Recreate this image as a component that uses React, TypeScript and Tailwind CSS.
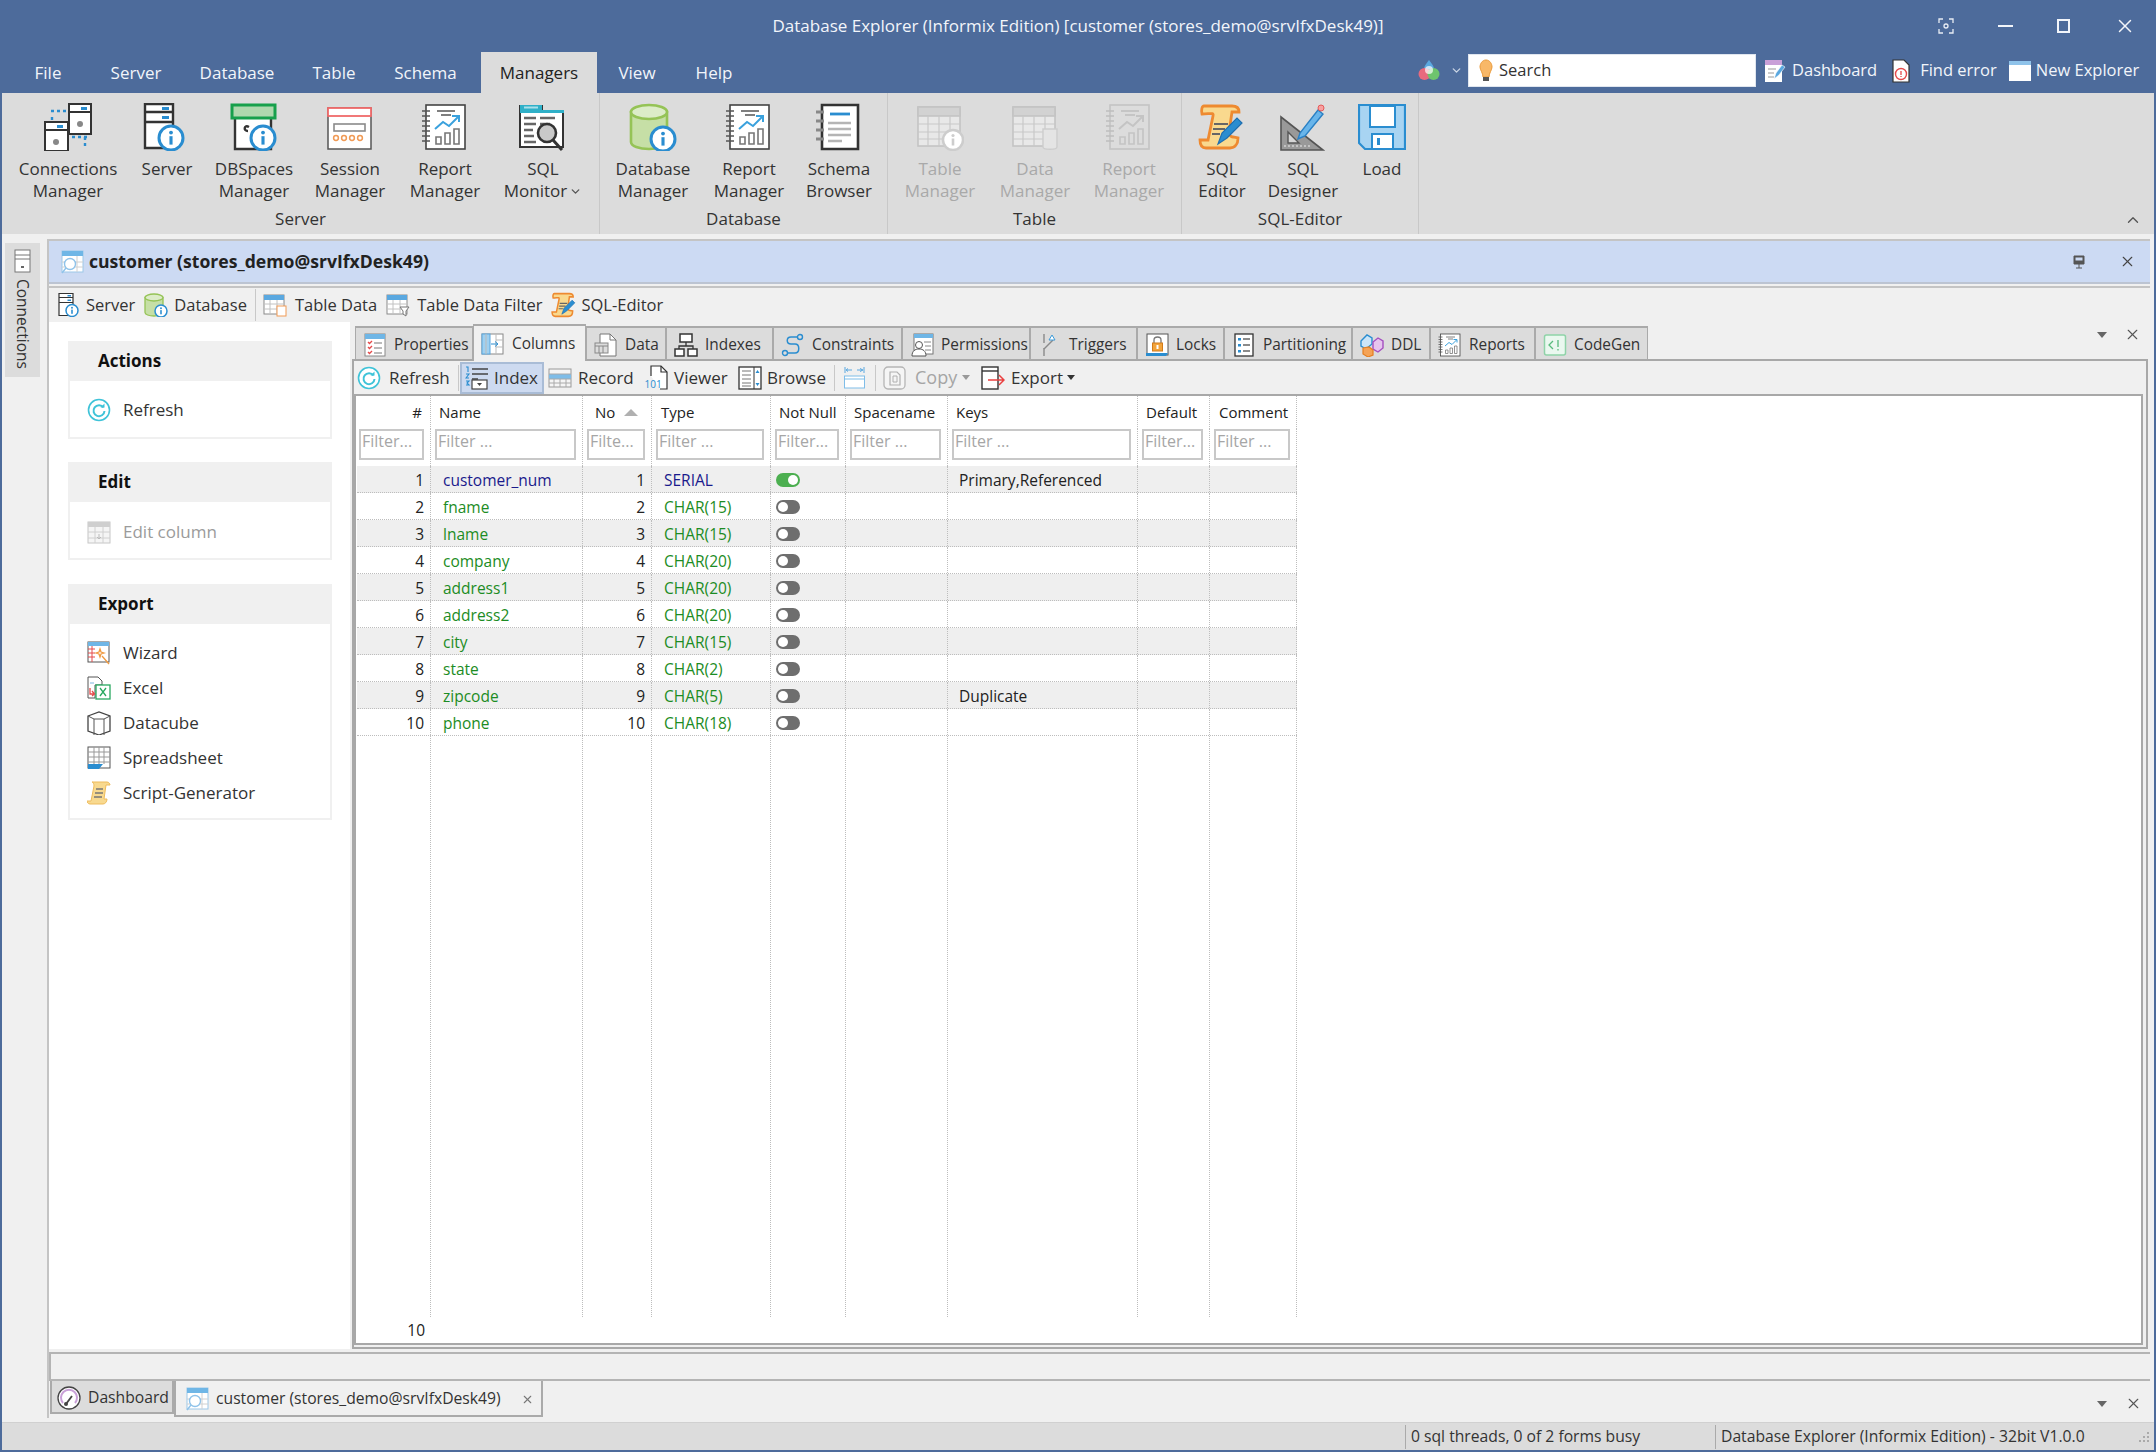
import type { ReactNode } from "react";
import { ChevronDown, ChevronUp, X } from "lucide-react";

type IconProps = { size?: number };

function Svg({ size = 24, box = 24, children }: { size?: number; box?: number; children: ReactNode }) {
  return (
    <svg width={size} height={size} viewBox={`0 0 ${box} ${box}`} fill="none" className="shrink-0">
      {children}
    </svg>
  );
}

function InfoBadge({ cx = 35, cy = 35, r = 12, color = "#2a8dd0" }: { cx?: number; cy?: number; r?: number; color?: string }) {
  return (
    <g>
      <circle cx={cx} cy={cy} r={r} fill="#fff" stroke={color} strokeWidth={r / 4} />
      <circle cx={cx} cy={cy - r * 0.45} r={r * 0.16} fill={color} />
      <rect x={cx - r * 0.13} y={cy - r * 0.15} width={r * 0.26} height={r * 0.7} fill={color} />
    </g>
  );
}

function ConnectionsIcon({ size = 48 }: IconProps) {
  return (
    <Svg size={size} box={48}>
      <rect x="25" y="1" width="22" height="30" fill="#fff" stroke="#333" strokeWidth="2" />
      <path d="M25 9h22" stroke="#333" strokeWidth="2" />
      <rect x="37" y="4" width="6" height="3" fill="#2a8dd0" />
      <circle cx="36" cy="21" r="3" fill="#888" />
      <rect x="1" y="19" width="23" height="29" fill="#fff" stroke="#333" strokeWidth="2" />
      <path d="M1 27h23" stroke="#333" strokeWidth="2" />
      <rect x="13" y="22" width="6" height="3" fill="#2a8dd0" />
      <circle cx="12" cy="39" r="3" fill="#888" />
      <path d="M7 8h18M8 14v3M28 34h15M41 34v9" stroke="#2a8dd0" strokeWidth="2.4" strokeDasharray="3 3" />
    </Svg>
  );
}

function ServerInfoIcon({ size = 48 }: IconProps) {
  return (
    <Svg size={size} box={48}>
      <path d="M2 1h28v44H2z" fill="#fff" stroke="#333" strokeWidth="2.4" />
      <path d="M2 9h28M2 19h28" stroke="#333" strokeWidth="2.4" />
      <rect x="19" y="4" width="7" height="3" fill="#2a8dd0" />
      <rect x="19" y="13" width="7" height="3" fill="#2a8dd0" />
      <InfoBadge cx={28} cy={35} />
    </Svg>
  );
}

function DbspacesIcon({ size = 48 }: IconProps) {
  return (
    <Svg size={size} box={48}>
      <path d="M5 10h36v36H5z" fill="#fff" stroke="#333" strokeWidth="2.4" />
      <path d="M19 24c-5-3-6 4-1 4" stroke="#333" strokeWidth="2.4" />
      <rect x="2" y="2" width="43" height="13" fill="#afd8ae" stroke="#17a04c" strokeWidth="3" />
      <InfoBadge cx={33} cy={35} />
    </Svg>
  );
}

function SessionIcon({ size = 48 }: IconProps) {
  return (
    <Svg size={size} box={48}>
      <rect x="2" y="5" width="43" height="41" fill="#fff" stroke="#555" strokeWidth="1.5" />
      <rect x="2" y="5" width="43" height="8" fill="#fff" stroke="#f06a6a" strokeWidth="1.8" />
      <rect x="8" y="21" width="31" height="7" fill="#fff" stroke="#8a8a8a" strokeWidth="1.6" />
      <g stroke="#f09a55" strokeWidth="1.5">
        <circle cx="10" cy="35" r="2.4" />
        <circle cx="18" cy="35" r="2.4" />
        <circle cx="26" cy="35" r="2.4" />
        <circle cx="34" cy="35" r="2.4" />
      </g>
    </Svg>
  );
}

function ReportIcon({ size = 48, dim = false }: IconProps & { dim?: boolean }) {
  const line = dim ? "#bdbdbd" : "#555";
  const blue = dim ? "#c4c4c4" : "#3aa1dd";
  return (
    <Svg size={size} box={48}>
      <rect x="5" y="2" width="39" height="44" fill={dim ? "none" : "#fff"} stroke={dim ? "#c4c4c4" : "#444"} strokeWidth="1.6" />
      <path d="M1 8h8M1 13h8M1 18h8M1 23h8M1 28h8M1 33h8M1 38h8" stroke={line} strokeWidth="1.6" />
      <path d="M16 8h18M20 12h10" stroke={line} strokeWidth="1.5" />
      <path d="M14 26l8-7 6 4 9-9M31 13h7v6" stroke={blue} strokeWidth="2" />
      <path d="M15 34h5v7h-5zM24 30h5v11h-5zM33 26h5v15h-5z" stroke={dim ? "#c4c4c4" : "#777"} strokeWidth="1.6" />
    </Svg>
  );
}

function MonitorIcon({ size = 48 }: IconProps) {
  return (
    <Svg size={size} box={48}>
      <path d="M1 4v-1h22v5h21v36H1z" fill="#fff" stroke="#333" strokeWidth="2" />
      <path d="M1 2h22v5h22v3H1z" fill="#2fb0c8" />
      <rect x="5" y="3.5" width="14" height="2" fill="#a9e0ea" />
      <path d="M5 15h12M21 15h15M5 21h12M21 21h10M5 27h9M5 33h10M5 39h12" stroke="#666" strokeWidth="2.4" />
      <circle cx="28" cy="30" r="9" fill="#c9c9c9" stroke="#333" strokeWidth="2.6" />
      <path d="M34 37l9 10" stroke="#333" strokeWidth="3" />
    </Svg>
  );
}

function DatabaseInfoIcon({ size = 48 }: IconProps) {
  return (
    <Svg size={size} box={48}>
      <path d="M2 9v30c0 4 8 7 18 7s18-3 18-7V9z" fill="#c6dfa6" stroke="#95c356" strokeWidth="2.6" />
      <ellipse cx="20" cy="9" rx="18" ry="7" fill="#dcecc8" stroke="#95c356" strokeWidth="2.6" />
      <InfoBadge cx={34} cy={36} />
    </Svg>
  );
}

function BrowserIcon({ size = 48 }: IconProps) {
  return (
    <Svg size={size} box={48}>
      <path d="M7 2h36v44H7z" fill="#fff" stroke="#333" strokeWidth="2.6" />
      <path d="M1 9h8M1 18h8M1 27h8M1 36h8" stroke="#888" strokeWidth="3" />
      <path d="M15 11h20" stroke="#2a8dd0" strokeWidth="2.8" />
      <path d="M13 20h23M13 26h23M13 32h23M13 38h14" stroke="#b4b4b4" strokeWidth="2.4" />
    </Svg>
  );
}

function TableGrey({ size = 48, badge }: IconProps & { badge: "info" | "db" }) {
  return (
    <Svg size={size} box={48}>
      <rect x="2" y="4" width="42" height="39" fill="#e8e8e8" stroke="#c4c4c4" strokeWidth="1.6" />
      <rect x="2" y="4" width="42" height="9" fill="#d2d2d2" stroke="#c4c4c4" strokeWidth="1.6" />
      <path d="M12 13v30M23 13v30M34 13v30M2 21h42M2 29h42M2 36h42" stroke="#c8c8c8" strokeWidth="1.2" />
      {badge === "info" ? (
        <InfoBadge cx={37} cy={37} r={10} color="#cdcdcd" />
      ) : (
        <path d="M32 26h14v18c0 3-14 3-14 0z" fill="#e4e4e4" stroke="#cdcdcd" strokeWidth="1.4" />
      )}
    </Svg>
  );
}

function ScriptIcon({ size = 48 }: IconProps) {
  return (
    <Svg size={size} box={48}>
      <path d="M6 3h28c5 0 7 2 7 6H34l-3 20c0 3 2 5 4 5l5 1c0 6-3 10-8 10H8c-4 0-6-3-6-8h8l5-24C16 9 12 11 4 11 3 7 4 3 6 3z" fill="#f9d98e" stroke="#ee8a30" strokeWidth="2.8" />
      <path d="M16 21h14M15 26h12M14 31h8" stroke="#666" strokeWidth="2" />
      <path d="M20 41l4-11L39 15l5 5-15 15z" fill="#2a8dd0" stroke="#1f6fb0" strokeWidth="1.2" />
    </Svg>
  );
}

function DesignerIcon({ size = 48 }: IconProps) {
  return (
    <Svg size={size} box={48}>
      <path d="M2 14l42 33H2z" fill="#999" stroke="#555" strokeWidth="1.6" />
      <path d="M9 29l11 11H9z" fill="#d5d5d5" stroke="#555" strokeWidth="1.4" />
      <path d="M6 44v-2M10 44v-2M14 44v-2M18 44v-2M22 44v-2M26 44v-2M30 44v-2" stroke="#eee" strokeWidth="1" />
      <path d="M19 36l2-6L39 7l5 4-18 22z" fill="#69b5ea" stroke="#2a80c4" strokeWidth="1.4" />
      <circle cx="42" cy="5" r="3" fill="#f8a0a0" stroke="#e45a5a" strokeWidth="1" />
    </Svg>
  );
}

function LoadIcon({ size = 48 }: IconProps) {
  return (
    <Svg size={size} box={48}>
      <path d="M1 2h46v44H7l-6-6z" fill="#a8d4f2" stroke="#2a8dd0" strokeWidth="2.2" />
      <rect x="12" y="3" width="25" height="21" fill="#fff" stroke="#2a8dd0" strokeWidth="2" />
      <rect x="14" y="31" width="21" height="15" fill="#fff" stroke="#2a8dd0" strokeWidth="2" />
      <rect x="19" y="35" width="3" height="7" fill="#2a8dd0" />
    </Svg>
  );
}

function RefreshIcon() {
  return (
    <Svg>
      <circle cx="12" cy="12" r="10.5" stroke="#3fc3d8" strokeWidth="1.6" fill="#fff" />
      <path d="M16.5 9.5A5.5 5.5 0 1 0 17.5 13" stroke="#3fc3d8" strokeWidth="2" />
      <path d="M13.5 9.5h4v-4z" fill="#3fc3d8" />
    </Svg>
  );
}

function TableSmall({ accent }: { accent: ReactNode }) {
  return (
    <Svg>
      <rect x="1" y="2" width="20" height="19" fill="#fff" stroke="#8a8a8a" />
      <rect x="1" y="2" width="20" height="5" fill="#5aa8e0" />
      <path d="M1 11h20M1 16h20M7 7v14M14 7v14" stroke="#c2c2c2" />
      {accent}
    </Svg>
  );
}

function PropertiesIcon() {
  return (
    <Svg>
      <rect x="2" y="1" width="20" height="22" fill="#fff" stroke="#888" />
      <rect x="2" y="1" width="20" height="5" fill="#6fb6e6" />
      <path d="M5 9l1.5 1.5L9 8M5 14l1.5 1.5L9 13M5 19l1.5 1.5L9 18" stroke="#e54b4b" strokeWidth="1.4" />
      <path d="M11 10h8M11 15h8M11 20h8" stroke="#777" />
    </Svg>
  );
}

function ColumnsIcon() {
  return (
    <Svg>
      <rect x="1" y="2" width="21" height="20" fill="#fff" stroke="#888" />
      <rect x="1" y="2" width="8" height="20" fill="#9fd0f0" stroke="#5aa8e0" />
      <path d="M5 2v20M15 2v20M15 8h7M15 15h7" stroke="#bbb" />
      <path d="M10 12h6M14 9.5l3 2.5-3 2.5" stroke="#2a8dd0" />
    </Svg>
  );
}

function DataIcon() {
  return (
    <Svg>
      <path d="M6 1h10l6 6v16H6z" fill="#fff" stroke="#777" />
      <path d="M16 1v6h6" stroke="#777" />
      <rect x="1" y="10" width="13" height="10" fill="#ddd" stroke="#888" />
      <path d="M1 13h13M5 13v7M9 13v7" stroke="#888" />
    </Svg>
  );
}

function IndexesIcon() {
  return (
    <Svg>
      <g stroke="#333" strokeWidth="1.5" fill="#fff">
        <rect x="6" y="1" width="12" height="8" />
        <rect x="1" y="16" width="9" height="7" />
        <rect x="14" y="16" width="9" height="7" />
      </g>
      <path d="M12 9v4M5 16v-3h14v3" stroke="#333" strokeWidth="1.3" />
    </Svg>
  );
}

function ConstraintsIcon() {
  return (
    <Svg>
      <circle cx="19" cy="4" r="2.5" stroke="#2a8dd0" strokeWidth="1.4" />
      <circle cx="4" cy="20" r="2.5" stroke="#2a8dd0" strokeWidth="1.4" />
      <path d="M17 4H10C5 4 5 11 10 11h4c5 0 5 9 0 9H7" stroke="#2a8dd0" strokeWidth="1.5" />
    </Svg>
  );
}

function PermissionsIcon() {
  return (
    <Svg>
      <rect x="4" y="1" width="19" height="20" fill="#fff" stroke="#777" />
      <rect x="4" y="1" width="19" height="4" fill="#6fb6e6" />
      <path d="M14 9h7M15 13h6M15 17h6" stroke="#888" />
      <circle cx="9" cy="12" r="3.5" fill="#fff" stroke="#555" />
      <path d="M2 23c0-5 3-7 7-7s7 2 7 7z" fill="#fff" stroke="#555" />
    </Svg>
  );
}

function TriggersIcon() {
  return (
    <Svg>
      <path d="M6 1v9M6 15v8" stroke="#8a8a8a" strokeWidth="1.4" />
      <path d="M6 16L15 7" stroke="#8a8a8a" strokeWidth="1.4" />
      <path d="M14 2l3 5h-6z" fill="#fff" stroke="#3a9ad9" />
    </Svg>
  );
}

function LocksIcon() {
  return (
    <Svg>
      <rect x="2" y="1" width="21" height="21" fill="#fff" stroke="#555" />
      <path d="M1 20h22l-2 3H1z" fill="#2a8dd0" />
      <path d="M9 10V7c0-4 7-4 7 0v3" stroke="#777" strokeWidth="1.3" />
      <rect x="7.5" y="10" width="10" height="8" fill="#f2a43c" stroke="#d27b1a" />
      <rect x="11.5" y="12" width="2" height="4" fill="#fff" />
    </Svg>
  );
}

function PartitionIcon() {
  return (
    <Svg>
      <rect x="3" y="1" width="18" height="22" fill="#fff" stroke="#333" strokeWidth="1.3" />
      <g fill="#2a8dd0">
        <rect x="6" y="5" width="3" height="2.5" />
        <rect x="6" y="11" width="3" height="2.5" />
        <rect x="6" y="17" width="3" height="2.5" />
      </g>
      <path d="M11 6h7M11 12h7M11 18h7" stroke="#666" strokeWidth="1.4" />
    </Svg>
  );
}

function DdlIcon() {
  return (
    <Svg>
      <path d="M1 8l6-6 5 3v6l-6 5-5-3z" fill="#cbe5f8" stroke="#2a8dd0" strokeWidth="1.4" />
      <path d="M13 9l5-4 5 3v7l-5 4-5-3z" fill="#e6c4ee" stroke="#a44fc0" strokeWidth="1.4" />
      <path d="M3 15l6-1 4 3v5l-5 2-5-3z" fill="#f5a356" stroke="#e57f21" strokeWidth="1.2" />
    </Svg>
  );
}

function CodeGenIcon() {
  return (
    <Svg>
      <rect x="1.5" y="2" width="21" height="20" rx="2" fill="#eaf8ef" stroke="#8fd3a8" strokeWidth="1.5" />
      <path d="M10 8l-4 4 4 4" stroke="#59bb7c" strokeWidth="1.3" />
      <path d="M15 7v7M15 16v1.5" stroke="#59bb7c" strokeWidth="1.3" />
    </Svg>
  );
}

function IndexIcon() {
  return (
    <Svg>
      <path d="M1 1h2v5M1 8h3L1 12h3M1 15h3l-2 2 2 2H1" stroke="#2a8dd0" strokeWidth="1.1" />
      <path d="M7 3h16M7 8h16M7 13h6" stroke="#444" strokeWidth="1.3" />
      <rect x="7" y="14" width="15" height="9" fill="#fff" stroke="#444" strokeWidth="1.2" />
      <path d="M12 17l2.5 3 2.5-3z" fill="#444" />
    </Svg>
  );
}

function RecordIcon() {
  return (
    <Svg>
      <rect x="1" y="3" width="22" height="18" fill="#f5f5f5" stroke="#999" />
      <rect x="1" y="8" width="22" height="5" fill="#7fbde8" />
      <path d="M1 8h22M1 13h22M1 17h22M6 13v8M12 13v8M18 13v8" stroke="#aaa" />
    </Svg>
  );
}

function ViewerIcon() {
  return (
    <svg width={24} height={28} viewBox="0 0 24 28" fill="none" className="shrink-0">
      <path d="M7 12V2h10l6 6v17h-7" fill="#fff" stroke="#333" strokeWidth="1.2" />
      <path d="M17 2v6h6" stroke="#333" strokeWidth="1.2" />
      <text x="0.5" y="24" fontSize="10" fill="#2a8dd0" fontFamily="Open Sans, sans-serif">
        101
      </text>
    </svg>
  );
}

function BrowseIcon() {
  return (
    <Svg>
      <rect x="1" y="1" width="22" height="22" fill="#fff" stroke="#333" strokeWidth="1.3" />
      <path d="M16 1v22" stroke="#333" />
      <path d="M4 5h9M4 9h9M4 13h9M4 17h9M4 20h9" stroke="#777" />
      <path d="M19.5 4l2 3h-4zM19.5 20l2-3h-4z" fill="#2a8dd0" />
    </Svg>
  );
}

function FitIcon() {
  return (
    <Svg>
      <path d="M2 1v6M21 1v6M4 4h5M19 4h-5M5 2.5L3 4l2 1.5M17 2.5L20 4l-3 1.5" stroke="#5aa8e0" />
      <rect x="1.5" y="10" width="20" height="12" fill="#fff" stroke="#7fbde8" />
      <path d="M1.5 13h20" stroke="#7fbde8" />
    </Svg>
  );
}

function CopyIcon() {
  return (
    <Svg>
      <rect x="1" y="1" width="21" height="22" rx="4" fill="#f5f5f5" stroke="#b5b5b5" strokeWidth="1.3" />
      <path d="M7 6h7l3 3v10H7z" fill="#f5f5f5" stroke="#b0b0b0" strokeWidth="1.2" />
      <path d="M10 10h4v6h-4z" stroke="#b0b0b0" />
    </Svg>
  );
}

function ExportIcon() {
  return (
    <Svg>
      <rect x="1" y="1" width="16" height="22" fill="#fff" stroke="#333" strokeWidth="1.4" />
      <path d="M1 5h16" stroke="#333" strokeWidth="1.4" />
      <path d="M7 14h16M18 9l5 5-5 5" stroke="#ea4040" strokeWidth="1.5" />
    </Svg>
  );
}

function WizardIcon() {
  return (
    <Svg>
      <rect x="1" y="1" width="21" height="20" fill="#fff" stroke="#555" />
      <rect x="1" y="1" width="21" height="4" fill="#6fb6e6" />
      <path d="M1 8h7M1 12h7M1 16h7M5 5v16" stroke="#e54b4b" />
      <path d="M13 8l1 3 3 1-3 1-1 3-1-3-3-1 3-1zM15 15l7 8" stroke="#f09a40" strokeWidth="1.3" />
    </Svg>
  );
}

function ExcelIcon() {
  return (
    <Svg>
      <path d="M1 1h10l4 4v4H8v13H1z" fill="#fff" stroke="#555" />
      <path d="M3 7h4" stroke="#7fb6e0" />
      <path d="M3 12v6h4M5 15l2.5 3-2.5 2" stroke="#e54b4b" strokeWidth="1.3" />
      <rect x="9" y="9" width="14" height="14" fill="#fff" stroke="#28a860" strokeWidth="1.3" />
      <path d="M13 12l6 8M19 12l-6 8" stroke="#28a860" strokeWidth="1.3" />
    </Svg>
  );
}

function CubeIcon() {
  return (
    <Svg>
      <path d="M1 5l11-4 11 4v15l-11 4-11-4z" stroke="#444" strokeWidth="1.3" />
      <path d="M1 5l6 3h10l6-3M7 8v16M17 8v16" stroke="#555" strokeWidth="1" />
    </Svg>
  );
}

function SpreadsheetIcon() {
  return (
    <Svg>
      <rect x="1" y="1" width="22" height="21" fill="#fff" stroke="#555" />
      <path d="M7 1v17M12 1v17M17 1v17M1 6h22M1 11h22M1 16h22" stroke="#999" />
      <path d="M1 18h15l-4 5H1z" fill="#2a8dd0" />
    </Svg>
  );
}

function ScrollIcon() {
  return (
    <Svg>
      <path d="M5 1h15c2 0 3 2 3 3h-4l-2 14h3c0 3-2 5-4 5H3c-2 0-3-2-3-3h4L7 5C7 3 6 1 5 1z" fill="#f8d98f" stroke="#eebb5c" />
      <path d="M9 8h7M8 12h8M7 16h8" stroke="#777" strokeWidth="1.4" />
    </Svg>
  );
}

function EditColumnIcon() {
  return (
    <Svg>
      <rect x="1" y="2" width="22" height="21" fill="#f5f5f5" stroke="#c6c6c6" />
      <rect x="1" y="2" width="22" height="5" fill="#cfcfcf" />
      <path d="M1 12h22M1 18h22M8 7v16M16 7v16" stroke="#d0d0d0" />
      <path d="M12 14v5M10 17l2 2 2-2" stroke="#bbb" />
    </Svg>
  );
}

function CustomerIcon() {
  return (
    <Svg>
      <rect x="2" y="1" width="21" height="21" fill="#fff" stroke="#9cc7e8" />
      <rect x="2" y="1" width="21" height="5" fill="#6fb6e6" />
      <path d="M17 6v16M2 12h21M2 17h21" stroke="#d0d0d0" />
      <circle cx="10" cy="14" r="5.5" fill="#fff" stroke="#8fc3ea" strokeWidth="1.4" />
      <path d="M6 18l-4 5" stroke="#8fc3ea" strokeWidth="1.4" />
    </Svg>
  );
}

function GaugeIcon() {
  return (
    <Svg>
      <circle cx="12" cy="12" r="11" fill="#fff" stroke="#444" strokeWidth="1.3" />
      <path d="M6 17a8 8 0 1 1 12 0" stroke="#c9a0d8" strokeWidth="2" />
      <path d="M9 18l6-8" stroke="#444" strokeWidth="1.8" />
      <circle cx="9" cy="18" r="2" fill="#444" />
    </Svg>
  );
}

function BulbIcon() {
  return (
    <Svg size={24}>
      <path d="M12 1c-4 0-6 4-6 7s3 6 3 10h6c0-4 3-7 3-10s-2-7-6-7z" fill="#f8b868" stroke="#ea9a3a" />
      <rect x="9" y="18" width="6" height="4" fill="#555" />
    </Svg>
  );
}

function PaletteIcon() {
  return (
    <Svg>
      <path d="M12 1c3 4 5 6 5 9H7c0-3 2-5 5-9z" fill="#5aa8e0" />
      <circle cx="7.5" cy="15" r="6" fill="#e86a7e" />
      <circle cx="16.5" cy="15" r="6" fill="#6ec46e" />
      <circle cx="12" cy="11" r="4" fill="#fff" opacity="0.7" />
    </Svg>
  );
}

function NoteIcon() {
  return (
    <Svg>
      <rect x="1" y="1" width="17" height="22" fill="#fff" />
      <rect x="1" y="1" width="17" height="5" fill="#c9a0d8" />
      <path d="M4 10h8M4 14h6M4 18h6" stroke="#999" />
      <path d="M10 20l2-6 6-8 3 2-6 8z" fill="#5aa8e0" stroke="#fff" strokeWidth="0.6" />
    </Svg>
  );
}

function FindErrorIcon() {
  return (
    <Svg>
      <path d="M4 1h11l5 5v17H4z" fill="#fff" stroke="#333" strokeWidth="1.2" />
      <circle cx="12" cy="15" r="5.5" stroke="#e54b4b" strokeWidth="1.4" />
      <path d="M12 12v4M12 17v1" stroke="#e54b4b" strokeWidth="1.3" />
    </Svg>
  );
}

function WindowIcon() {
  return (
    <Svg>
      <rect x="1" y="2" width="22" height="20" fill="#fff" />
      <rect x="1" y="2" width="22" height="4" fill="#8fc3ea" />
    </Svg>
  );
}

function ServerTiny() {
  return (
    <Svg>
      <rect x="4" y="1" width="15" height="22" fill="#fff" stroke="#777" />
      <path d="M4 6h15M4 10h15" stroke="#777" />
      <rect x="10" y="17" width="3" height="2" fill="#666" />
    </Svg>
  );
}

type RibbonItem = { lines: string[]; icon: ReactNode; w: string; disabled?: boolean; menu?: boolean };
type RibbonGroup = { label: string; w: string; pl: string; items: RibbonItem[] };

const ribbon: RibbonGroup[] = [
  {
    label: "Server",
    w: "w-[598px]",
    pl: "pl-[9px]",
    items: [
      { lines: ["Connections", "Manager"], icon: <ConnectionsIcon />, w: "w-[114px]" },
      { lines: ["Server"], icon: <ServerInfoIcon />, w: "w-[84px]" },
      { lines: ["DBSpaces", "Manager"], icon: <DbspacesIcon />, w: "w-[90px]" },
      { lines: ["Session", "Manager"], icon: <SessionIcon />, w: "w-[102px]" },
      { lines: ["Report", "Manager"], icon: <ReportIcon />, w: "w-[88px]" },
      { lines: ["SQL", "Monitor"], icon: <MonitorIcon />, w: "w-[108px]", menu: true },
    ],
  },
  {
    label: "Database",
    w: "w-[288px]",
    pl: "pl-[5px]",
    items: [
      { lines: ["Database", "Manager"], icon: <DatabaseInfoIcon />, w: "w-[96px]" },
      { lines: ["Report", "Manager"], icon: <ReportIcon />, w: "w-[96px]" },
      { lines: ["Schema", "Browser"], icon: <BrowserIcon />, w: "w-[84px]" },
    ],
  },
  {
    label: "Table",
    w: "w-[294px]",
    pl: "pl-[5px]",
    items: [
      { lines: ["Table", "Manager"], icon: <TableGrey badge="info" />, w: "w-[94px]", disabled: true },
      { lines: ["Data", "Manager"], icon: <TableGrey badge="db" />, w: "w-[96px]", disabled: true },
      { lines: ["Report", "Manager"], icon: <ReportIcon dim />, w: "w-[92px]", disabled: true },
    ],
  },
  {
    label: "SQL-Editor",
    w: "w-[237px]",
    pl: "pl-[5px]",
    items: [
      { lines: ["SQL", "Editor"], icon: <ScriptIcon />, w: "w-[70px]" },
      { lines: ["SQL", "Designer"], icon: <DesignerIcon />, w: "w-[92px]" },
      { lines: ["Load"], icon: <LoadIcon />, w: "w-[66px]" },
    ],
  },
];

const menus = [
  { label: "File", w: "w-[96px]" },
  { label: "Server", w: "w-[80px]" },
  { label: "Database", w: "w-[122px]" },
  { label: "Table", w: "w-[72px]" },
  { label: "Schema", w: "w-[111px]" },
  { label: "Managers", w: "w-[116px]", active: true },
  { label: "View", w: "w-[80px]" },
  { label: "Help", w: "w-[74px]" },
];

const tabs = [
  { label: "Properties", w: "w-[118px]", icon: <PropertiesIcon /> },
  { label: "Columns", w: "w-[113px]", icon: <ColumnsIcon />, active: true },
  { label: "Data", w: "w-[80px]", icon: <DataIcon /> },
  { label: "Indexes", w: "w-[107px]", icon: <IndexesIcon /> },
  { label: "Constraints", w: "w-[129px]", icon: <ConstraintsIcon /> },
  { label: "Permissions", w: "w-[128px]", icon: <PermissionsIcon /> },
  { label: "Triggers", w: "w-[107px]", icon: <TriggersIcon /> },
  { label: "Locks", w: "w-[87px]", icon: <LocksIcon /> },
  { label: "Partitioning", w: "w-[128px]", icon: <PartitionIcon /> },
  { label: "DDL", w: "w-[78px]", icon: <DdlIcon /> },
  { label: "Reports", w: "w-[105px]", icon: <ReportIcon size={24} /> },
  { label: "CodeGen", w: "w-[113px]", icon: <CodeGenIcon /> },
];

const colGrid = "grid grid-cols-[74px_152px_69px_119px_75px_102px_190px_72px_87px] w-[940px]";
const cellLine = "border-r border-dotted border-[#bdbdbd]";

const filters = ["Filter...", "Filter ...", "Filte...", "Filter ...", "Filter...", "Filter ...", "Filter ...", "Filter...", "Filter ..."];

const rows = [
  { name: "customer_num", type: "SERIAL", on: true, keys: "Primary,Referenced" },
  { name: "fname", type: "CHAR(15)" },
  { name: "lname", type: "CHAR(15)" },
  { name: "company", type: "CHAR(20)" },
  { name: "address1", type: "CHAR(20)" },
  { name: "address2", type: "CHAR(20)" },
  { name: "city", type: "CHAR(15)" },
  { name: "state", type: "CHAR(2)" },
  { name: "zipcode", type: "CHAR(5)", keys: "Duplicate" },
  { name: "phone", type: "CHAR(18)" },
];

function RibbonButton({ item }: { item: RibbonItem }) {
  return (
    <div className={`${item.w} flex flex-col items-center ${item.disabled ? "text-[#a9a9a9]" : "text-[#333]"}`}>
      {item.icon}
      <div className="mt-[7px] flex flex-col items-center leading-[22px]">
        {item.lines.map((line) => (
          <span key={line} className="flex items-center whitespace-nowrap">
            {line}
            {item.menu && line === "Monitor" && <ChevronDown size={13} strokeWidth={2.5} className="ml-[2px] text-[#555]" />}
          </span>
        ))}
      </div>
    </div>
  );
}

function TitleBar() {
  return (
    <div className="grid h-[52px] grid-cols-[1fr_auto_1fr] items-center text-[#f2f5fa]">
      <div />
      <div className="text-[17px]">Database Explorer (Informix Edition) [customer (stores_demo@srvIfxDesk49)]</div>
      <div className="flex items-center justify-end pr-[20px]">
        <svg width="16" height="16" viewBox="0 0 16 16" fill="none" className="mr-[44px]">
          <path d="M1 5V1h4M11 1h4v4M15 11v4h-4M5 15H1v-4" stroke="#e8edf5" strokeWidth="1.3" />
          <circle cx="8" cy="8" r="2" stroke="#e8edf5" strokeWidth="1.3" />
        </svg>
        <span className="mr-[44px] h-[2px] w-[15px] bg-[#f2f5fa]" />
        <span className="mr-[44px] h-[14px] w-[13px] border-2 border-[#f2f5fa]" />
        <X size={22} strokeWidth={1.6} className="text-[#f2f5fa]" />
      </div>
    </div>
  );
}

function MenuBar() {
  return (
    <div className="flex h-[41px] text-[#f2f5fa]">
      {menus.map((menu) => (
        <div
          key={menu.label}
          className={`${menu.w} flex items-center justify-center ${menu.active ? "bg-[#dcdcdc] text-[#222]" : ""}`}
        >
          {menu.label}
        </div>
      ))}
      <div className="ml-auto flex w-[739px] items-start pt-[2px] text-[16.5px]">
        <div className="flex h-[33px] items-center">
          <PaletteIcon />
          <ChevronDown size={13} strokeWidth={2.5} className="ml-[9px] mr-[5px] text-[#c8d3e4]" />
        </div>
        <div className="flex h-[33px] w-[288px] items-center border border-[#e0e6ef] bg-white pl-[5px] text-[#333]">
          <BulbIcon />
          <span className="ml-[1px]">Search</span>
        </div>
        <div className="ml-[8px] flex h-[33px] items-center gap-[4px]">
          <NoteIcon />
          <span>Dashboard</span>
        </div>
        <div className="ml-[12px] flex h-[33px] items-center gap-[7px]">
          <FindErrorIcon />
          <span>Find error</span>
        </div>
        <div className="ml-[11px] flex h-[33px] items-center gap-[4px]">
          <WindowIcon />
          <span>New Explorer</span>
        </div>
      </div>
    </div>
  );
}

function Ribbon() {
  return (
    <div className="flex h-[141px] bg-[#dcdcdc]">
      {ribbon.map((group) => (
        <div key={group.label} className={`${group.w} flex flex-col border-r border-[#c8c8c8]`}>
          <div className={`flex h-[115px] pt-[10px] ${group.pl}`}>
            {group.items.map((item) => (
              <RibbonButton key={item.lines.join(" ")} item={item} />
            ))}
          </div>
          <div className="text-center leading-[22px] text-[#333]">{group.label}</div>
        </div>
      ))}
      <div className="flex flex-1 items-end justify-end pb-[5px] pr-[12px]">
        <ChevronUp size={18} strokeWidth={1.8} className="text-[#555]" />
      </div>
    </div>
  );
}

function DocToolbar() {
  return (
    <div className="mt-[2px] flex h-[36px] items-center border-t-2 border-[#c4c4c4] bg-[#f0f0f0] pl-[9px] text-[16.5px] text-[#333]">
      <span className="flex items-center gap-[4px]">
        <ServerInfoIcon size={24} />
        <span>Server</span>
      </span>
      <span className="ml-[9px] flex items-center gap-[6px]">
        <DatabaseInfoIcon size={24} />
        <span>Database</span>
      </span>
      <span className="ml-[8px] h-[32px] w-px bg-[#c8c8c8]" />
      <span className="ml-[7px] flex items-center gap-[8px]">
        <TableSmall accent={<rect x="14" y="13" width="9" height="10" fill="#fff" stroke="#f09a55" />} />
        <span>Table Data</span>
      </span>
      <span className="ml-[9px] flex items-center gap-[7px]">
        <TableSmall accent={<path d="M14 14h9l-3 4v5l-3-2v-3z" fill="#fff" stroke="#777" />} />
        <span>Table Data Filter</span>
      </span>
      <span className="ml-[9px] flex items-center gap-[4px]">
        <ScriptIcon size={26} />
        <span>SQL-Editor</span>
      </span>
    </div>
  );
}

function SideGroup({ title, children, className = "" }: { title: string; children: ReactNode; className?: string }) {
  return (
    <div className={`border-2 border-t-0 border-[#f0f0f0] ${className}`}>
      <div className="flex h-[40px] items-center bg-[#f0f0f0] pl-[28px] font-bold text-[#111]">{title}</div>
      {children}
    </div>
  );
}

function SideItem({ icon, label, disabled }: { icon: ReactNode; label: string; disabled?: boolean }) {
  return (
    <div className={`flex h-[35px] items-center gap-[12px] pl-[17px] ${disabled ? "text-[#9b9b9b]" : "text-[#333]"}`}>
      {icon}
      <span>{label}</span>
    </div>
  );
}

function Sidebar() {
  return (
    <aside className="flex w-[301px] shrink-0 flex-col gap-[23px] bg-white pl-[19px] pr-[18px] pt-[19px]">
      <SideGroup title="Actions">
        <div className="flex h-[56px] items-center pt-[2px]">
          <SideItem icon={<RefreshIcon />} label="Refresh" />
        </div>
      </SideGroup>
      <SideGroup title="Edit">
        <div className="flex h-[56px] items-center pt-[4px]">
          <SideItem icon={<EditColumnIcon />} label="Edit column" disabled />
        </div>
      </SideGroup>
      <SideGroup title="Export" className="mt-[1px]">
        <div className="pb-[8px] pt-[11px]">
          <SideItem icon={<WizardIcon />} label="Wizard" />
          <SideItem icon={<ExcelIcon />} label="Excel" />
          <SideItem icon={<CubeIcon />} label="Datacube" />
          <SideItem icon={<SpreadsheetIcon />} label="Spreadsheet" />
          <SideItem icon={<ScrollIcon />} label="Script-Generator" />
        </div>
      </SideGroup>
    </aside>
  );
}

function TabStrip() {
  return (
    <div className="flex h-[37px] items-end pl-[3px] text-[15.4px]">
      {tabs.map((tab) => (
        <div
          key={tab.label}
          className={`${tab.w} flex items-center gap-[7px] border-x border-t-2 border-[#aaa] pl-[7px] text-[#333] ${
            tab.active ? "relative z-10 -mb-[2px] h-[37px] bg-[#f0f0f0]" : "h-[33px] bg-[#dcdcdc] pt-[2px]"
          }`}
        >
          {tab.icon}
          <span className="whitespace-nowrap">{tab.label}</span>
        </div>
      ))}
      <div className="ml-auto flex items-center gap-[17px] self-start pr-[9px] pt-[4px] text-[#555]">
        <span className="h-0 w-0 border-x-[5px] border-t-[6px] border-x-transparent border-t-[#666]" />
        <X size={17} strokeWidth={1.6} />
      </div>
    </div>
  );
}

function ColumnsToolbar() {
  return (
    <div className="flex h-[33px] items-center pl-[3px] text-[#333]">
      <span className="flex w-[98px] items-center gap-[8px]">
        <RefreshIcon />
        Refresh
      </span>
      <span className="ml-[3px] h-[26px] w-px bg-[#c8c8c8]" />
      <span className="ml-[1px] flex h-[32px] w-[84px] items-center gap-[5px] border-2 border-[#a9bcd6] bg-[#cddaf0] pl-[3px]">
        <IndexIcon />
        Index
      </span>
      <span className="ml-[4px] flex w-[96px] items-center gap-[6px]">
        <RecordIcon />
        Record
      </span>
      <span className="flex w-[94px] items-center gap-[6px]">
        <ViewerIcon />
        Viewer
      </span>
      <span className="flex w-[96px] items-center gap-[5px]">
        <BrowseIcon />
        Browse
      </span>
      <span className="h-[26px] w-px bg-[#c8c8c8]" />
      <span className="ml-[8px] flex w-[32px] items-center">
        <FitIcon />
      </span>
      <span className="h-[26px] w-px bg-[#c8c8c8]" />
      <span className="ml-[7px] flex w-[98px] items-center gap-[8px] text-[#a5a5a5]">
        <CopyIcon />
        <span className="text-[18px]">Copy</span>
        <span className="-ml-[3px] h-0 w-0 border-x-[4px] border-t-[5px] border-x-transparent border-t-[#999]" />
      </span>
      <span className="flex items-center gap-[6px]">
        <ExportIcon />
        Export
        <span className="-ml-[2px] h-0 w-0 border-x-[4px] border-t-[5px] border-x-transparent border-t-[#333]" />
      </span>
    </div>
  );
}

function Toggle({ on }: { on?: boolean }) {
  return (
    <span
      className={`flex h-[14px] w-[24px] rounded-full p-[2px] ${on ? "justify-end bg-[#4caf50]" : "justify-start bg-[#6e6e6e]"}`}
    >
      <span className="h-[10px] w-[10px] rounded-full bg-white" />
    </span>
  );
}

function Grid() {
  return (
    <div className="flex min-h-0 flex-1 flex-col border-2 border-[#a8a8a8] bg-white pl-[1px] text-[15.5px]">
      <div className={`${colGrid} h-[33px] items-center text-[15px] leading-[33px] text-[#222]`}>
        <div className={`${cellLine} h-full pr-[8px] text-right`}>#</div>
        <div className={`${cellLine} h-full pl-[8px]`}>Name</div>
        <div className={`${cellLine} flex h-full items-center pl-[12px]`}>
          No
          <span className="ml-[9px] h-0 w-0 border-x-[7px] border-b-[7px] border-x-transparent border-b-[#b0b0b0]" />
        </div>
        <div className={`${cellLine} h-full pl-[9px]`}>Type</div>
        <div className={`${cellLine} h-full pl-[8px]`}>Not Null</div>
        <div className={`${cellLine} h-full pl-[8px]`}>Spacename</div>
        <div className={`${cellLine} h-full pl-[8px]`}>Keys</div>
        <div className={`${cellLine} h-full pl-[8px]`}>Default</div>
        <div className={`${cellLine} h-full pl-[9px]`}>Comment</div>
      </div>
      <div className={`${colGrid} h-[37px]`}>
        {filters.map((text, i) => (
          <div key={i} className={`${cellLine} pb-[6px] pr-[6px] ${i === 0 ? "pl-[2px]" : "pl-[4px]"}`}>
            <div className="h-full overflow-hidden whitespace-nowrap border-2 border-[#c8c8c8] pl-[1px] text-[16px] leading-[21px] text-[#a6a6a6]">
              {text}
            </div>
          </div>
        ))}
      </div>
      {rows.map((row, i) => (
        <div
          key={row.name}
          className={`${colGrid} h-[27px] items-stretch border-b border-dotted border-[#bdbdbd] leading-[28px] ${
            i % 2 === 0 ? "bg-[#efefef]" : "bg-white"
          }`}
        >
          <div className={`${cellLine} pr-[6px] text-right text-[#222]`}>{i + 1}</div>
          <div className={`${cellLine} pl-[12px] ${row.on ? "text-[#1a1a8c]" : "text-[#1c8c24]"}`}>{row.name}</div>
          <div className={`${cellLine} pr-[6px] text-right text-[#222]`}>{i + 1}</div>
          <div className={`${cellLine} pl-[12px] ${row.on ? "text-[#1a1a8c]" : "text-[#1c8c24]"}`}>{row.type}</div>
          <div className={`${cellLine} flex items-center pl-[5px]`}>
            <Toggle on={row.on} />
          </div>
          <div className={cellLine} />
          <div className={`${cellLine} pl-[11px] text-[#222]`}>{row.keys}</div>
          <div className={cellLine} />
          <div className={cellLine} />
        </div>
      ))}
      <div className={`${colGrid} min-h-0 flex-1`}>
        {filters.map((_, i) => (
          <div key={i} className={cellLine} />
        ))}
      </div>
      <div className="h-[26px] w-[68px] text-right leading-[26px] text-[#222]">10</div>
    </div>
  );
}

function BottomBar() {
  return (
    <div className="flex h-[37px] items-start bg-[#f0f0f0] pl-[1px] text-[15.7px]">
      <div className="flex h-[33px] w-[124px] items-center gap-[7px] border-x-2 border-b-2 border-[#aaa] bg-[#dcdcdc] pl-[5px] pt-[2px] text-[#333]">
        <GaugeIcon />
        Dashboard
      </div>
      <div className="flex h-[36px] w-[369px] items-center border-x-2 border-b-2 border-[#aaa] bg-[#f0f0f0] pl-[9px] pt-[2px] text-[#333]">
        <CustomerIcon />
        <span className="ml-[7px] whitespace-nowrap">customer (stores_demo@srvIfxDesk49)</span>
        <X size={13} strokeWidth={2} className="ml-[20px] text-[#777]" />
      </div>
      <div className="ml-auto flex h-full items-center gap-[18px] pr-[8px] pt-[8px] text-[#555]">
        <span className="h-0 w-0 border-x-[5px] border-t-[6px] border-x-transparent border-t-[#666]" />
        <X size={17} strokeWidth={1.6} />
      </div>
    </div>
  );
}

function DocumentWindow() {
  return (
    <div className="flex min-w-0 flex-1 flex-col border-l-2 border-t-2 border-[#c4c4c4]">
      <div className="flex h-[43px] items-center border-b-2 border-[#bcc4d2] bg-[#ccdaf3] pl-[11px] pr-[14px]">
        <CustomerIcon />
        <span className="ml-[5px] text-[17.6px] font-bold text-[#222]">customer (stores_demo@srvIfxDesk49)</span>
        <svg width="12" height="14" viewBox="0 0 12 14" className="ml-auto mr-[34px]">
          <path d="M1 1h10v8H1zM6 9v4M3 13h6" fill="#555" stroke="#555" />
          <rect x="2.5" y="2.5" width="7" height="3" fill="#ccdaf3" />
        </svg>
        <X size={17} strokeWidth={1.6} className="text-[#444]" />
      </div>
      <DocToolbar />
      <div className="flex min-h-0 flex-1">
        <Sidebar />
        <div className="flex min-w-0 flex-1 flex-col border-l-2 border-[#f0f0f0]">
          <TabStrip />
          <div className="mr-[2px] flex min-h-0 flex-1 flex-col border-2 border-[#a8a8a8] bg-[#f0f0f0] pb-[2px] pr-[3px]">
            <ColumnsToolbar />
            <Grid />
          </div>
        </div>
      </div>
      <div className="mt-[3px] h-[29px] border-y-2 border-l-2 border-[#b4b4b4] bg-[#f0f0f0]" />
      <BottomBar />
    </div>
  );
}

export default function App() {
  return (
    <div className="flex h-[1452px] w-[2156px] flex-col overflow-hidden border-x-2 border-b-2 border-[#4d6b9b] bg-[#f0f0f0] font-['Open_Sans',sans-serif] text-[17px]">
      <div className="-mx-[2px] bg-[#4d6b9b]">
        <TitleBar />
        <MenuBar />
      </div>
      <Ribbon />
      <div className="flex min-h-0 flex-1 pt-[5px]">
        <div className="w-[45px] shrink-0 pl-[3px] pt-[4px]">
          <div className="flex h-[134px] w-[35px] flex-col items-center bg-[#dcdcdc] pt-[6px] text-[#333]">
            <ServerTiny />
            <span className="mt-[6px] text-[15.5px] [writing-mode:vertical-rl]">Connections</span>
          </div>
        </div>
        <div className="flex min-w-0 flex-1 pr-[4px]">
          <DocumentWindow />
        </div>
      </div>
      <div className="mt-[4px] flex h-[28px] items-center border-t border-[#d0d0d0] bg-[#dcdcdc] text-[15.7px] text-[#333]">
        <span className="ml-[1403px] h-[24px] w-px bg-[#aaa]" />
        <span className="ml-[5px] w-[304px]">0 sql threads, 0 of 2 forms busy</span>
        <span className="h-[24px] w-px bg-[#aaa]" />
        <span className="ml-[5px]">Database Explorer (Informix Edition) - 32bit V1.0.0</span>
        <span className="ml-auto mr-[5px] grid grid-cols-3 gap-[2px]">
          {[0, 1, 2, 3, 4, 5, 6, 7, 8].map((n) => (
            <span key={n} className={`h-[2px] w-[2px] ${n === 0 || n === 1 || n === 3 ? "bg-transparent" : "bg-[#aaa]"}`} />
          ))}
        </span>
      </div>
    </div>
  );
}
